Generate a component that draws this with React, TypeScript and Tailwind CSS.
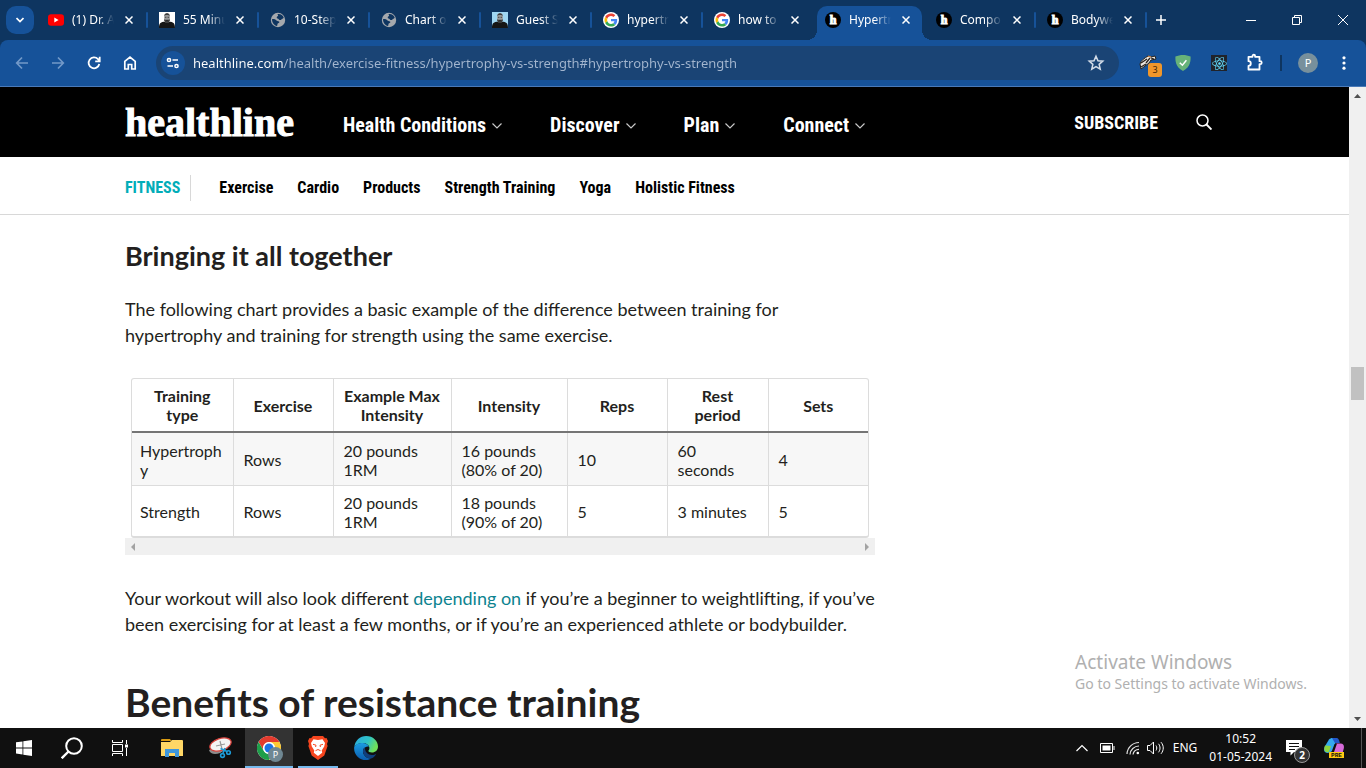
import React from "react";
import { FaReact } from "react-icons/fa";

type TabInfo = { title: string; icon: React.ReactNode; active?: boolean; divider?: boolean };

const ui = "font-['Noto_Sans','Open_Sans',sans-serif]";
const site = "font-['Lato',sans-serif]";
const narrow = "font-['Roboto_Condensed','Roboto',sans-serif]";

function Globe() {
  return (
    <svg viewBox="0 0 16 16" className="size-4 shrink-0">
      <circle cx="8" cy="8" r="7.2" fill="#a4a8ad" />
      <path
        d="M7.5 2.200c2.800-.6 5.200 1 6.200 3.300-.5 1.600-1.700 1-2.300 2.100-.8 1-2.200.4-2.700-.4-.5-.9-1.900-.4-2-1.600-.1-1 1-1.200 1.400-1.900.2-.5-.4-.9-.6-1.500zM2 7.200c1.700-.3 3.300.3 4.500 1.200 1.100.9 2.700.5 2.900 1.500.1.900-1.400 1-1.800 1.800-.4.800 0 1.500-.6 2.200C4.200 13.500 2 10.800 2 7.200z"
        fill="#0e3560"
      />
    </svg>
  );
}

function Youtube() {
  return (
    <svg viewBox="0 0 16 16" className="size-4 shrink-0">
      <rect x="0" y="2.300" width="16" height="11.400" rx="3" fill="#f00" />
      <path d="M6.300 5.500v5l4.300-2.500z" fill="#fff" />
    </svg>
  );
}

function Portrait({ tint }: { tint: string }) {
  return (
    <svg viewBox="0 0 16 16" className="size-4 shrink-0">
      <rect width="16" height="16" fill={tint} />
      <path d="M0 16c0-4 1-5.500 4.500-6.200l3.500.7 3.500-.7C15 10.500 16 12 16 16z" fill="#161616" />
      <ellipse cx="8" cy="5.500" rx="2.900" ry="4.500" fill="#9a9a9a" />
      <path d="M5.100 4c.5-3.600 5.300-3.600 5.800 0-1-1.300-4.800-1.300-5.800 0zM5.100 7c.7 1.200 5.100 1.200 5.800 0 .2 2.600-1 4-2.900 4s-3.100-1.400-2.900-4z" fill="#3b3b3b" />
      <path d="M6 5.300h1.400M8.600 5.300H10M7 8.400h2" stroke="#222" strokeWidth=".7" />
    </svg>
  );
}

function Google() {
  return (
    <svg viewBox="0 0 48 48" className="size-4 shrink-0">
      <circle cx="24" cy="24" r="24" fill="#fff" />
      <g transform="translate(4.500 4.500) scale(.81)">
        <path fill="#EA4335" d="M24 9.500c3.540 0 6.710 1.220 9.210 3.600l6.850-6.850C35.900 2.380 30.470 0 24 0 14.620 0 6.510 5.380 2.560 13.220l7.980 6.190C12.430 13.720 17.740 9.500 24 9.500z" />
        <path fill="#4285F4" d="M46.980 24.550c0-1.570-.15-3.090-.38-4.550H24v9.020h12.940c-.58 2.960-2.260 5.480-4.780 7.180l7.730 6c4.510-4.180 7.090-10.360 7.090-17.650z" />
        <path fill="#FBBC05" d="M10.530 28.590c-.48-1.450-.76-2.990-.76-4.590s.27-3.140.76-4.590l-7.980-6.190C.92 16.460 0 20.120 0 24c0 3.880.92 7.540 2.560 10.780l7.970-6.190z" />
        <path fill="#34A853" d="M24 48c6.480 0 11.930-2.130 15.890-5.810l-7.730-6c-2.150 1.450-4.920 2.300-8.160 2.300-6.260 0-11.570-4.220-13.470-9.910l-7.980 6.190C6.510 42.620 14.620 48 24 48z" />
      </g>
    </svg>
  );
}

function HealthBadge() {
  return (
    <span className="flex size-4 shrink-0 items-center justify-center rounded-full bg-black font-['Liberation_Serif',serif] text-[12px] leading-4 font-bold text-white [-webkit-text-stroke:1px_white]">
      h
    </span>
  );
}

const tabs: TabInfo[] = [
  { title: "(1) Dr. A", icon: <Youtube />, divider: true },
  { title: "55 Minu", icon: <Portrait tint="#ffffff" />, divider: true },
  { title: "10-Step", icon: <Globe />, divider: true },
  { title: "Chart of", icon: <Globe />, divider: true },
  { title: "Guest S", icon: <Portrait tint="#9fd6f2" />, divider: true },
  { title: "hypertro", icon: <Google />, divider: true },
  { title: "how to ", icon: <Google /> },
  { title: "Hypertr", icon: <HealthBadge />, active: true },
  { title: "Compo", icon: <HealthBadge />, divider: true },
  { title: "Bodywe", icon: <HealthBadge />, divider: true },
];

function Tab({ tab }: { tab: TabInfo }) {
  return (
    <div className="relative flex h-10 min-w-0 flex-1 items-center pl-[11px]">
      {tab.active && (
        <div className="absolute inset-x-[3px] top-[6px] bottom-0 rounded-t-[10px] bg-[#165299]">
          <div className="absolute bottom-0 -left-[10px] size-[10px] bg-[radial-gradient(circle_at_top_left,transparent_10px,#165299_10px)]" />
          <div className="absolute -right-[10px] bottom-0 size-[10px] bg-[radial-gradient(circle_at_top_right,transparent_10px,#165299_10px)]" />
        </div>
      )}
      <div className="relative flex min-w-0 flex-1 items-center">
        {tab.icon}
        <span className="ml-2 w-[42px] overflow-hidden text-[12px] leading-5 whitespace-nowrap text-white [mask-image:linear-gradient(to_right,black_60%,transparent)]">
          {tab.title}
        </span>
        <button aria-label="Close tab" className="ml-[7px] flex size-4 items-center justify-center">
          <svg viewBox="0 0 8 8" className="size-2" stroke="#fff" strokeWidth="1.500">
            <path d="M.5.5l7 7M7.500.5l-7 7" />
          </svg>
        </button>
      </div>
      {tab.divider && <div className="h-4 w-[2px] rounded bg-[#165299]" />}
    </div>
  );
}

function TabStrip() {
  return (
    <div className="flex h-10 shrink-0 items-center bg-[#0e3560] pl-1.5">
      <button aria-label="Search tabs" className="mr-[3px] flex size-7 shrink-0 items-center justify-center rounded-[10px] bg-[#165299]">
        <svg viewBox="0 0 8 6" className="h-1.5 w-2" fill="none" stroke="#fff" strokeWidth="1.700">
          <path d="M.5 1L4 4.500 7.500 1" />
        </svg>
      </button>
      <div className="flex max-w-[1110px] min-w-0 flex-1">
        {tabs.map((t, i) => (
          <Tab key={i} tab={t} />
        ))}
      </div>
      <button aria-label="New tab" className="ml-1.5 flex size-4 items-center justify-center">
        <svg viewBox="0 0 10 10" className="size-2.5" stroke="#fff" strokeWidth="1.500">
          <path d="M5 0v10M0 5h10" />
        </svg>
      </button>
      <div className="ml-auto flex shrink-0">
        <button aria-label="Minimize" className="flex h-10 w-[46px] items-center justify-center">
          <svg viewBox="0 0 10 10" className="size-2.5" stroke="#fff"><path d="M0 5.500h10" /></svg>
        </button>
        <button aria-label="Restore" className="flex h-10 w-[46px] items-center justify-center">
          <svg viewBox="0 0 10 10" className="size-2.5" fill="none" stroke="#fff"><path d="M.5 2.500h7v7h-7zM2.500 2.500v-2h7v7h-2" /></svg>
        </button>
        <button aria-label="Close" className="flex h-10 w-[46px] items-center justify-center">
          <svg viewBox="0 0 10 10" className="size-2.5" stroke="#fff"><path d="M0 0l10 10M10 0L0 10" /></svg>
        </button>
      </div>
    </div>
  );
}

function Toolbar() {
  return (
    <div className="shrink-0 bg-[#0e3560]">
      <div className="flex h-[47px] items-center rounded-t-lg border-b border-[#4a7ab8] bg-[#165299] pr-3 pl-3">
        <button aria-label="Back" className="mr-4 size-5 shrink-0">
          <svg viewBox="0 0 20 20" fill="none" stroke="#7399c8" strokeWidth="1.700"><path d="M16 10H5M10 4.500L4.700 10l5.300 5.500" /></svg>
        </button>
        <button aria-label="Forward" className="mr-4 size-5 shrink-0">
          <svg viewBox="0 0 20 20" fill="none" stroke="#7399c8" strokeWidth="1.700"><path d="M4 10h11M10 4.500l5.300 5.500-5.300 5.500" /></svg>
        </button>
        <button aria-label="Reload" className="mr-4 size-5 shrink-0">
          <svg viewBox="0 0 20 20" fill="none" stroke="#fff" strokeWidth="1.800"><path d="M15.300 11A5.400 5.400 0 1 1 14 6.200l1.500 1.600M15.700 3.800v4.500h-4.500" /></svg>
        </button>
        <button aria-label="Home" className="mr-4 size-5 shrink-0">
          <svg viewBox="0 0 20 20" fill="none" stroke="#fff" strokeWidth="1.700"><path d="M4.800 16V8.300L10 4l5.200 4.300V16h-3.500v-4.500H8.300V16z" /></svg>
        </button>
        <div className="flex h-[34px] min-w-0 flex-1 items-center rounded-full bg-[#1a4475] pr-3.5 pl-[5px]">
          <button aria-label="Site information" className="flex size-6 shrink-0 items-center justify-center rounded-full bg-[#165299]">
            <svg viewBox="0 0 14 12" className="h-3 w-3.5" fill="none" stroke="#fff" strokeWidth="1.500">
              <circle cx="3" cy="3" r="1.600" /><path d="M6.500 3H12M1.500 9H7" /><circle cx="10.500" cy="9" r="1.600" />
            </svg>
          </button>
          <input
            aria-label="Address"
            readOnly
            value="healthline.com/health/exercise-fitness/hypertrophy-vs-strength#hypertrophy-vs-strength"
            className="ml-2 min-w-0 flex-1 bg-[linear-gradient(to_right,white_91px,#a3b6cf_91px)] bg-clip-text text-[13px] leading-5 text-transparent outline-none"
          />
          <button aria-label="Bookmark" className="size-[18px] shrink-0">
            <svg viewBox="0 0 20 20" fill="none" stroke="#d3dce8" strokeWidth="1.700"><path d="M10 2.500l2.200 5 5.300.5-4 3.500 1.200 5.300-4.700-2.800-4.700 2.800 1.200-5.300-4-3.500 5.300-.5z" /></svg>
          </button>
        </div>
        <div className="ml-[18px] flex shrink-0 items-center">
          <button aria-label="Honey extension" className="relative mr-3.5 size-6">
            <svg viewBox="0 0 24 24">
              <path d="M3 13c1-4 5-6 8-8l3 1 4-1 1 3-5 1-2 3-4 3-4 3z" fill="#ece7e0" stroke="#23211f" strokeWidth="1" />
              <path d="M4 12l6-4M9 12l4-5M14 7l3 1M4 16l5-3" stroke="#2a211c" strokeWidth="1.300" />
              <path d="M11 5l3 1" stroke="#d98a4a" strokeWidth="1.300" />
            </svg>
            <span className="absolute -right-px -bottom-[2px] flex h-[14px] w-[14px] items-center justify-center rounded-[3px] bg-[#f0962a] text-[9px] leading-3 text-[#3c2308]">3</span>
          </button>
          <button aria-label="AdGuard" className="mr-5 size-4">
            <svg viewBox="0 0 16 16">
              <path d="M8 0c2.500 0 5.400.6 7.600 1.500C15.600 5 16 12 8 16 0 12 .4 5 .4 1.500 2.600.6 5.500 0 8 0z" fill="#67b279" />
              <path d="M4.800 7.700l2.600 2.500 4-5" fill="none" stroke="#fff" strokeWidth="1.500" />
            </svg>
          </button>
          <button aria-label="React DevTools" className="mr-[18px] flex size-4 items-center justify-center bg-[#20232a] text-[#61dafb]">
            <FaReact size={15} />
          </button>
          <button aria-label="Extensions" className="mr-[15px] size-5">
            <svg viewBox="0 0 20 20" fill="none" stroke="#fff" strokeWidth="1.800" strokeLinejoin="round">
              <path d="M3.500 3.800h4V3a1.300 1.300 0 0 1 2.600 0v.8h4.400v4.400h.7a1.500 1.500 0 0 1 0 3h-.7V16.500h-11v-3.700a2.300 2.300 0 0 0 0-4.600z" />
            </svg>
          </button>
          <div className="mr-4 h-4 w-[2px] bg-[#0e3560]" />
          <button aria-label="Profile" className="mr-4 flex size-5 items-center justify-center rounded-full bg-[#78909c] text-[11px] leading-5 text-white">P</button>
          <button aria-label="Menu" className="size-5">
            <svg viewBox="0 0 20 20" fill="#fff"><circle cx="10" cy="4.800" r="1.600" /><circle cx="10" cy="10" r="1.600" /><circle cx="10" cy="15.200" r="1.600" /></svg>
          </button>
        </div>
      </div>
    </div>
  );
}

function SiteHeader() {
  return (
    <header className={"shrink-0 " + narrow}>
      <div className="flex h-[70px] items-center bg-black pr-[137px] pl-[125px] text-white">
        <a href="#home" className="mt-0.5 mr-12 w-[170px] shrink-0 font-['Liberation_Serif',serif] text-[40px] leading-10 font-bold [-webkit-text-stroke:1px_white]">healthline</a>
        <nav className="mt-1.5 flex gap-12">
          {["Health Conditions", "Discover", "Plan", "Connect"].map((n) => (
            <button key={n} className="flex items-center gap-1.5 text-[20px] leading-6 font-bold whitespace-nowrap">
              {n}
              <svg viewBox="0 0 10 6" className="mt-0.5 h-1.5 w-2.5" fill="none" stroke="#c8c8c8" strokeWidth="1.200"><path d="M.5.500L5 5 9.500.5" /></svg>
            </button>
          ))}
        </nav>
        <a href="#subscribe" className="mt-0.5 ml-auto text-[18px] leading-6 font-bold">SUBSCRIBE</a>
        <button aria-label="Search" className="ml-[38px] size-4 shrink-0">
          <svg viewBox="0 0 16 16" fill="none" stroke="#fff" strokeWidth="1.500"><circle cx="6.500" cy="6.500" r="5.500" /><path d="M10.500 10.500l5 5" strokeWidth="1.900" /></svg>
        </button>
      </div>
      <nav className="flex h-[58px] items-center border-b border-[#d8d8d8] bg-white pt-1 pl-[125px] text-[16px] leading-5 font-bold text-black">
        <a href="#fitness" className="border-r border-[#d8d8d8] py-[3px] pr-2.5 text-[#02adb8]">FITNESS</a>
        <div className="ml-7 flex gap-6">
          {["Exercise", "Cardio", "Products", "Strength Training", "Yoga", "Holistic Fitness"].map((n) => (
            <a key={n} href="#topic" className="whitespace-nowrap">{n}</a>
          ))}
        </div>
      </nav>
    </header>
  );
}

const columns = ["Training\ntype", "Exercise", "Example Max\nIntensity", "Intensity", "Reps", "Rest\nperiod", "Sets"];
const rows = [
  ["Hypertrophy", "Rows", "20 pounds\n1RM", "16 pounds\n(80% of 20)", "10", "60\nseconds", "4"],
  ["Strength", "Rows", "20 pounds\n1RM", "18 pounds\n(90% of 20)", "5", "3 minutes", "5"],
];

function Article() {
  return (
    <main className={"px-[125px] text-[#231f20] " + site}>
      <div className="max-w-[750px]">
        <h3 className="pt-[25px] text-[27px] leading-8 font-bold">Bringing it all together</h3>
        <p className="mt-6 max-w-[700px] text-[18px] leading-[26px]">
          The following chart provides a basic example of the difference between training for hypertrophy and training for strength using the same exercise.
        </p>
        <div className="mt-[30px]">
          <div className="mx-1.5 overflow-hidden rounded-[3px] border border-b-2 border-[#dcdcdc]">
            <table className="w-full table-fixed border-collapse text-[16px] leading-[19px] whitespace-pre-line">
              <colgroup>
                <col className="w-[101px]" />
                <col className="w-[100px]" />
                <col className="w-[118px]" />
                <col className="w-[116px]" />
                <col className="w-[100px]" />
                <col className="w-[101px]" />
                <col />
              </colgroup>
              <thead>
                <tr className="h-[53px] border-b-2 border-[#757575]">
                  {columns.map((c) => (
                    <th key={c} className="border-r border-r-[#dcdcdc] px-2 font-bold last:border-r-0">{c}</th>
                  ))}
                </tr>
              </thead>
              <tbody>
                {rows.map((r) => (
                  <tr key={r[0]} className="h-[53px] border-b border-[#dcdcdc] odd:bg-[#f7f7f7] last:h-[51px] last:border-b-0">
                    {r.map((c, i) => (
                      <td key={i} className="border-r border-[#dcdcdc] pt-0.5 pr-2 pl-2.5 wrap-anywhere first:pl-2 last:border-r-0">{c}</td>
                    ))}
                  </tr>
                ))}
              </tbody>
            </table>
          </div>
          <div className="flex h-[17px] items-center justify-between bg-[#f0f0f0] px-1.5">
            <svg viewBox="0 0 4 8" className="h-2 w-1" fill="#a3a3a3"><path d="M4 0v8L0 4z" /></svg>
            <svg viewBox="0 0 4 8" className="h-2 w-1" fill="#a3a3a3"><path d="M0 0v8l4-4z" /></svg>
          </div>
        </div>
        <p className="mt-[30px] text-[18px] leading-[26px]">
          Your workout will also look different <a href="#more" className="text-[#0d8390]">depending on</a> if you’re a beginner to weightlifting, if you’ve been exercising for at least a few months, or if you’re an experienced athlete or bodybuilder.
        </p>
        <h2 className="mt-[42px] text-[39px] leading-[46px] font-bold whitespace-nowrap">Benefits of resistance training</h2>
      </div>
    </main>
  );
}

function PageScrollbar() {
  return (
    <div className="flex w-[17px] shrink-0 flex-col items-center bg-[#f0f0f0] py-[7px]">
      <svg viewBox="0 0 7 4" className="h-1 w-[7px]" fill="#505050"><path d="M0 4h7L3.500 0z" /></svg>
      <div className="mt-[269px] h-[33px] w-[13px] bg-[#c1c1c1]" />
      <svg viewBox="0 0 7 4" className="mt-auto h-1 w-[7px]" fill="#505050"><path d="M0 0h7L3.500 4z" /></svg>
    </div>
  );
}

function TaskButton({ label, className = "", children }: { label: string; className?: string; children: React.ReactNode }) {
  return (
    <button aria-label={label} className={"relative flex h-10 w-12 shrink-0 items-center justify-center " + className}>
      {children}
    </button>
  );
}

function Taskbar() {
  return (
    <footer className="flex h-10 shrink-0 items-center bg-[#101010] text-white">
      <TaskButton label="Start">
        <svg viewBox="0 0 16 16" className="size-4" fill="#fff"><path d="M0 2.300l6.500-.9v6.100H0zM7.300 1.300L16 0v7.500H7.300zM0 8.400h6.500v6.100L0 13.600zM7.300 8.400H16V16l-8.700-1.300z" /></svg>
      </TaskButton>
      <TaskButton label="Search">
        <svg viewBox="0 0 22 22" className="size-[22px]" fill="none" stroke="#fff" strokeWidth="2"><circle cx="13" cy="9" r="7.800" /><path d="M7.500 14.500L.7 21.300" strokeWidth="2.400" /></svg>
      </TaskButton>
      <TaskButton label="Task view">
        <svg viewBox="0 0 16 16" className="size-4" fill="none" stroke="#fff"><path d="M.5 0v2.500h10V0M.5 16v-2.500h10V16M.5 4.500h10v7H.5zM14.500 0v4M14.500 8v8" /><path d="M13 4.500h3v3h-3z" fill="#fff" stroke="none" /></svg>
      </TaskButton>
      <TaskButton label="File Explorer" className="ml-1">
        <svg viewBox="0 0 22 18" className="h-[18px] w-[22px]">
          <path d="M0 1a1 1 0 0 1 1-1h8l1.500 2H0z" fill="#d99a12" /><path d="M0 3h9l2-2h10a1 1 0 0 1 1 1v15H0z" fill="#ffd766" /><path d="M4 18v-8h14v8h-4v-4H8v4z" fill="#3f97dc" />
        </svg>
      </TaskButton>
      <TaskButton label="Snipping Tool">
        <svg viewBox="0 0 24 22" className="h-[22px] w-6">
          <path d="M1 13c1 4 6 5 11 3l8-5-6-4z" fill="#8d8d8d" />
          <ellipse cx="12.500" cy="7.500" rx="11" ry="6" transform="rotate(-18 12.500 7.500)" fill="#f4f4f4" stroke="#d6403a" strokeWidth="1.300" />
          <path d="M12 4l2 8M8 9l9-2" stroke="#9a9a9a" strokeWidth="1.200" />
          <g fill="none" stroke="#1d9ad6" strokeWidth="1.600"><path d="M12.500 11.500l6.500 3M17 11l-2 5" /><circle cx="14.500" cy="18.500" r="1.900" /><circle cx="20.500" cy="15.500" r="1.800" /></g>
        </svg>
      </TaskButton>
      <TaskButton label="Chrome" className="ml-px border-b-2 border-[#76b9ed] bg-[#333333] pt-0.5">
        <svg viewBox="0 0 48 48" className="size-6">
          <circle cx="24" cy="24" r="24" fill="#fff" />
          <path d="M3.200 12A24 24 0 0 1 44.800 12H24a12 12 0 0 0-10.400 18z" fill="#e33b2e" />
          <path d="M44.800 12A24 24 0 0 1 24 48l10.400-18A12 12 0 0 0 24 12z" fill="#fcc934" />
          <path d="M24 48A24 24 0 0 1 3.200 12l10.400 18a12 12 0 0 0 20.800 0z" fill="#1e9e4a" />
          <circle cx="24" cy="24" r="11.500" fill="#fff" /><circle cx="24" cy="24" r="9" fill="#1a73e8" />
        </svg>
        <span className="absolute right-2.5 bottom-1 flex size-[15px] items-center justify-center rounded-full bg-[#6f8792] text-[9px] leading-3">P</span>
      </TaskButton>
      <TaskButton label="Brave" className="ml-px">
        <svg viewBox="0 0 20 24" className="h-6 w-5">
          <path d="M5 0h10l2 2.300 1.500-.2L20 5l-1 3 .6 2-3.300 9.500L10 24l-6.300-4.500L.4 10 1 8 0 5l1.500-2.900L3 2.300z" fill="#f5451e" />
          <path d="M10 4l4.500-.7L17 7l-.8 3.500-2.500 4 .5 2.300L10 20l-4.200-3.200.5-2.300-2.500-4L3 7l2.500-3.700z" fill="#fff" />
          <path d="M5 8.300l3 .9-.4 1.800M15 8.300l-3 .9.400 1.800M7.500 14.700L10 13.500l2.500 1.200" fill="none" stroke="#f5451e" strokeWidth="1" />
        </svg>
        <span className="absolute inset-x-1 bottom-0 h-0.5 bg-[#76b9ed]" />
      </TaskButton>
      <TaskButton label="Edge">
        <svg viewBox="0 0 24 24" className="size-6">
          <defs>
            <linearGradient id="edgeTop" x1="0" y1="0" x2="1" y2=".4"><stop offset="0" stopColor="#2aa9e0" /><stop offset=".6" stopColor="#2fc4c6" /><stop offset="1" stopColor="#6fe05a" /></linearGradient>
            <linearGradient id="edgeLow" x1="0" y1="0" x2="0" y2="1"><stop offset="0" stopColor="#1b9de2" /><stop offset="1" stopColor="#0b5cad" /></linearGradient>
          </defs>
          <path d="M.3 11C1 4.500 6 0 12.200 0 19 0 24 5 24 10.500c0 3.700-2.700 6-6 6-2.300 0-4-.9-3.600-1.700.4-.6 1-1.300 1-2.700C15.400 9 12 7 8.500 7 4.500 7 1.500 8.700.3 11z" fill="url(#edgeTop)" />
          <path d="M.2 11C2 8 5 6.800 8.500 7c3 .1 6 1.600 6.700 4-.8-1-5.500-.5-6.200 3.500-.6 4 3.500 8.500 8 8-1.500 1-3.300 1.500-5 1.500C5 24-.6 18.300.2 11z" fill="url(#edgeLow)" />
          <path d="M9 14.500c.2-1.400.9-2.400 2-3-.5 4 3 7.500 7 7.500 1.800 0 3-.4 4.300-1.200C21 20.500 19 22 17 22.500c-4.500.5-8.500-4-8-8z" fill="#103f7c" />
        </svg>
      </TaskButton>

      <div className="ml-auto flex shrink-0 items-center">
        <button aria-label="Show hidden icons" className="mr-3 size-3">
          <svg viewBox="0 0 12 12" fill="none" stroke="#fff" strokeWidth="1.200"><path d="M.5 9L6 3.500 11.500 9" /></svg>
        </button>
        <svg viewBox="0 0 15 10" className="mr-[11px] h-2.5 w-[15px]" fill="none" stroke="#fff"><path d="M.5.5h12v9H.5zM14 3v4" /><path d="M2.500 2.500h8v5h-8z" fill="#fff" stroke="none" /></svg>
        <svg viewBox="0 0 14 14" className="mr-[7px] size-3.5" fill="none" stroke="#e0e0e0" strokeWidth="1.200"><path d="M1 13A12 12 0 0 1 13 1.500M4 13.500A9 9 0 0 1 13 5M7 13.500A6 6 0 0 1 13 8.300" /><circle cx="11.800" cy="12" r="1.300" fill="#fff" stroke="none" /></svg>
        <svg viewBox="0 0 17 14" className="mr-[9px] h-3.5 w-[17px]" fill="none" stroke="#fff"><path d="M.5 4.500H3l3.500-3.500v12L3 9.500H.5zM9 4.500c1 1.500 1 3.500 0 5M11.500 2.800c2 2.500 2 6 0 8.500M14 1.200c3 3.500 3 8 0 11.600" /></svg>
        <span className="mr-3 text-[12px] leading-4">ENG</span>
        <div className="mr-[13px] flex flex-col text-center text-[12px] leading-[18px]"><span>10:52</span><span>01-05-2024</span></div>
        <button aria-label="Notifications" className="relative mr-[15px] h-6 w-6">
          <svg viewBox="0 0 24 24"><path d="M1 4h16v12H9l-3.500 3.500V16H1z" fill="#fff" /><path d="M4 7.500h10M4 10.500h10M4 13.500h6" stroke="#101010" /></svg>
          <span className="absolute -right-px -bottom-[3px] flex size-4 items-center justify-center rounded-full border border-[#999] bg-[#333] text-[10px] leading-3 font-bold">2</span>
        </button>
        <button aria-label="Copilot" className="mr-[17px] h-5 w-5">
          <svg viewBox="0 0 20 20">
            <path d="M5 1.500C6 .5 7 0 8.500 0H13L9 13l-5 2c-4 0-4.500-3-3.500-6z" fill="#35a9ef" /><path d="M1 7.500l6 .5-2 6c-3 1-5.500-1-4.500-4.500z" fill="#8dd53f" />
            <path d="M8 0h4.500c2 0 2.700 2 3.300 5H11z" fill="#2257c9" /><path d="M12 5.500h4.500c3.500 0 4 3 3 6L18.500 15H9z" fill="#d66ad9" /><path d="M10.500 6l2.500-.5L10 14H7.500z" fill="#101010" />
            <rect x="5" y="14" width="15" height="6" fill="#ffc911" /><text x="12.500" y="19" textAnchor="middle" fontSize="6" fontWeight="bold" fontFamily="Liberation Mono" fill="#101010">PRE</text>
          </svg>
        </button>
        <div className="mr-1 h-10 w-px bg-[#555]" />
      </div>
    </footer>
  );
}

export default function App() {
  return (
    <div className={"flex h-screen flex-col overflow-hidden bg-white " + ui}>
      <TabStrip />
      <Toolbar />
      <div className="relative flex min-h-0 flex-1">
        <div className="min-w-0 flex-1 overflow-hidden">
          <SiteHeader />
          <Article />
        </div>
        <PageScrollbar />
        <div className="absolute right-[59px] bottom-[34px] text-[#b0b0b0]">
          <div className="text-[19px] leading-6">Activate Windows</div>
          <div className="text-[14px] leading-5">Go to Settings to activate Windows.</div>
        </div>
      </div>
      <Taskbar />
    </div>
  );
}
